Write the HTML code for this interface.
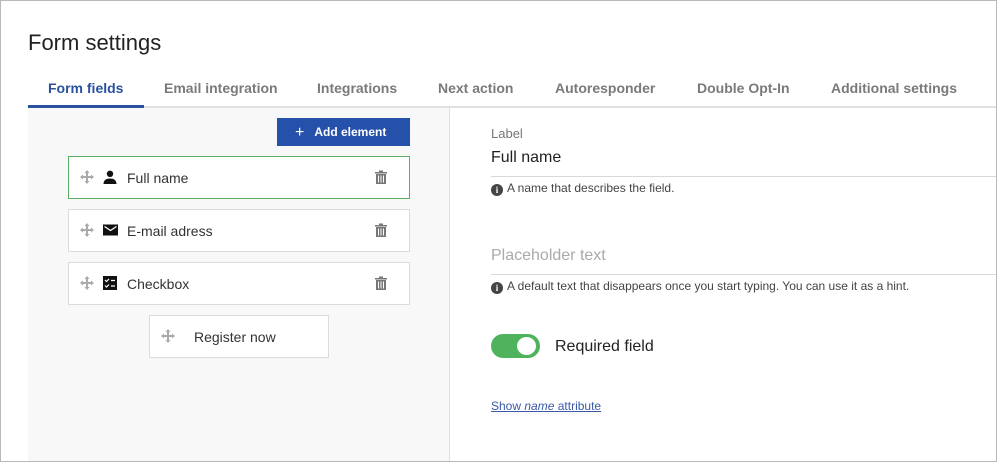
<!DOCTYPE html>
<html><head><meta charset="utf-8"><style>
*{margin:0;padding:0;box-sizing:border-box}
body{width:997px;height:462px;overflow:hidden;background:#fff;font-family:"Liberation Sans",sans-serif;position:relative}
.frame{position:absolute;left:0;top:0;width:997px;height:462px;border:1px solid #b8b8b8}
.a{position:absolute;white-space:nowrap}
.tab{position:absolute;top:80px;font-size:14px;font-weight:bold;color:#7a7a7a}
.row{position:absolute;left:68px;width:342px;height:43px;background:#fff;border:1px solid #dcdcdc}
.row .t{position:absolute;left:58px;top:13px;font-size:14px;color:#333}
.mv{position:absolute;left:11px;top:13px}
.ic{position:absolute;left:34px;top:13px}
.tr{position:absolute;right:21px;top:13px}
.hint{font-size:12px;color:#444}
.info{display:inline-block;width:12px;height:12px;border-radius:50%;background:#444;color:#fff;font-size:9px;font-weight:bold;text-align:center;line-height:12px;vertical-align:-1px;margin-right:4px;font-family:"Liberation Serif",serif}
</style></head><body>
<div class="a" style="left:28px;top:30px;font-size:22px;color:#222">Form settings</div>
<div class="tab" style="left:48px;color:#2a50a0">Form fields</div>
<div class="tab" style="left:164px">Email integration</div>
<div class="tab" style="left:317px">Integrations</div>
<div class="tab" style="left:438px">Next action</div>
<div class="tab" style="left:555px">Autoresponder</div>
<div class="tab" style="left:697px">Double Opt-In</div>
<div class="tab" style="left:831px">Additional settings</div>
<div class="a" style="left:28px;top:106px;width:969px;height:2px;background:#e0e0e0"></div>
<div class="a" style="left:28px;top:105px;width:116px;height:3px;background:#2a50a0"></div>
<div class="a" style="left:28px;top:108px;width:422px;height:354px;background:#f8f8f8;border-right:1px solid #e0e0e0"></div>
<div class="a" style="left:277px;top:118px;width:133px;height:28px;background:#2551aa;color:#fff;font-size:12px;font-weight:bold;line-height:28px;padding-left:18px"><span style="font-size:16px;font-weight:normal;vertical-align:-1px;margin-right:10px">+</span>Add element</div>

<svg width="0" height="0" style="position:absolute"><defs>
<symbol id="mv" viewBox="0 0 14 14"><path d="M7 0L9.5 3H8V6H11V4.5L14 7L11 9.5V8H8V11H9.5L7 14L4.5 11H6V8H3V9.5L0 7L3 4.5V6H6V3H4.5Z" fill="#aaa"/></symbol>
<symbol id="tr" viewBox="0 0 14 14"><path d="M1 2H13V3.5H1ZM5 0.5H9V2H5ZM2 4H12V14H2Z" fill="#777"/><path d="M4.5 5.5V12.5M7 5.5V12.5M9.5 5.5V12.5" stroke="#fff" stroke-width="1"/></symbol>
</defs></svg>

<div class="row" style="top:156px;border-color:#5cae63">
<svg class="mv" width="14" height="14"><use href="#mv"/></svg>
<svg class="ic" width="14" height="14" viewBox="0 0 14 14"><circle cx="7" cy="3.8" r="3.2" fill="#111"/><path d="M0.5 14C0.5 10 3.5 8.5 7 8.5S13.5 10 13.5 14Z" fill="#111"/></svg>
<div class="t">Full name</div>
<svg class="tr" width="14" height="14"><use href="#tr"/></svg></div>

<div class="row" style="top:209px">
<svg class="mv" width="14" height="14"><use href="#mv"/></svg>
<svg class="ic" width="15" height="14" viewBox="0 0 15 14"><rect x="0" y="1.5" width="15" height="11" fill="#111"/><path d="M1.5 3.5L7.5 7.5L13.5 3.5" stroke="#fff" stroke-width="1.3" fill="none"/></svg>
<div class="t">E-mail adress</div>
<svg class="tr" width="14" height="14"><use href="#tr"/></svg></div>

<div class="row" style="top:262px">
<svg class="mv" width="14" height="14"><use href="#mv"/></svg>
<svg class="ic" width="14" height="14" viewBox="0 0 14 14"><rect x="0" y="0" width="14" height="14" fill="#111"/><path d="M2 4L3.5 5.5L6 3M2 9.5L3.5 11L6 8.5" stroke="#fff" stroke-width="1.2" fill="none"/><path d="M8 4.5H12M8 10H12" stroke="#fff" stroke-width="1.3"/></svg>
<div class="t">Checkbox</div>
<svg class="tr" width="14" height="14"><use href="#tr"/></svg></div>

<div class="row" style="left:149px;top:315px;width:180px">
<svg class="mv" width="14" height="14"><use href="#mv"/></svg>
<div class="t" style="left:44px">Register now</div></div>

<div class="a" style="left:491px;top:126px;font-size:13px;color:#777">Label</div>
<div class="a" style="left:491px;top:149px;font-size:16px;color:#222">Full name</div>
<div class="a" style="left:491px;top:176px;width:506px;height:1px;background:#d8d8d8"></div>
<div class="a hint" style="left:491px;top:181px"><span class="info">i</span>A name that describes the field.</div>
<div class="a" style="left:491px;top:247px;font-size:16px;color:#aaa">Placeholder text</div>
<div class="a" style="left:491px;top:274px;width:506px;height:1px;background:#d8d8d8"></div>
<div class="a hint" style="left:491px;top:279px"><span class="info">i</span>A default text that disappears once you start typing. You can use it as a hint.</div>
<div class="a" style="left:491px;top:334px;width:49px;height:24px;border-radius:12px;background:#4fb35d"></div>
<div class="a" style="left:517px;top:337px;width:19px;height:18px;border-radius:50%;background:#fff"></div>
<div class="a" style="left:555px;top:338px;font-size:16px;color:#222">Required field</div>
<div class="a" style="left:491px;top:399px;font-size:12px;color:#3a5aa8;text-decoration:underline">Show <i>name</i> attribute</div>
<div class="frame"></div>
</body></html>
